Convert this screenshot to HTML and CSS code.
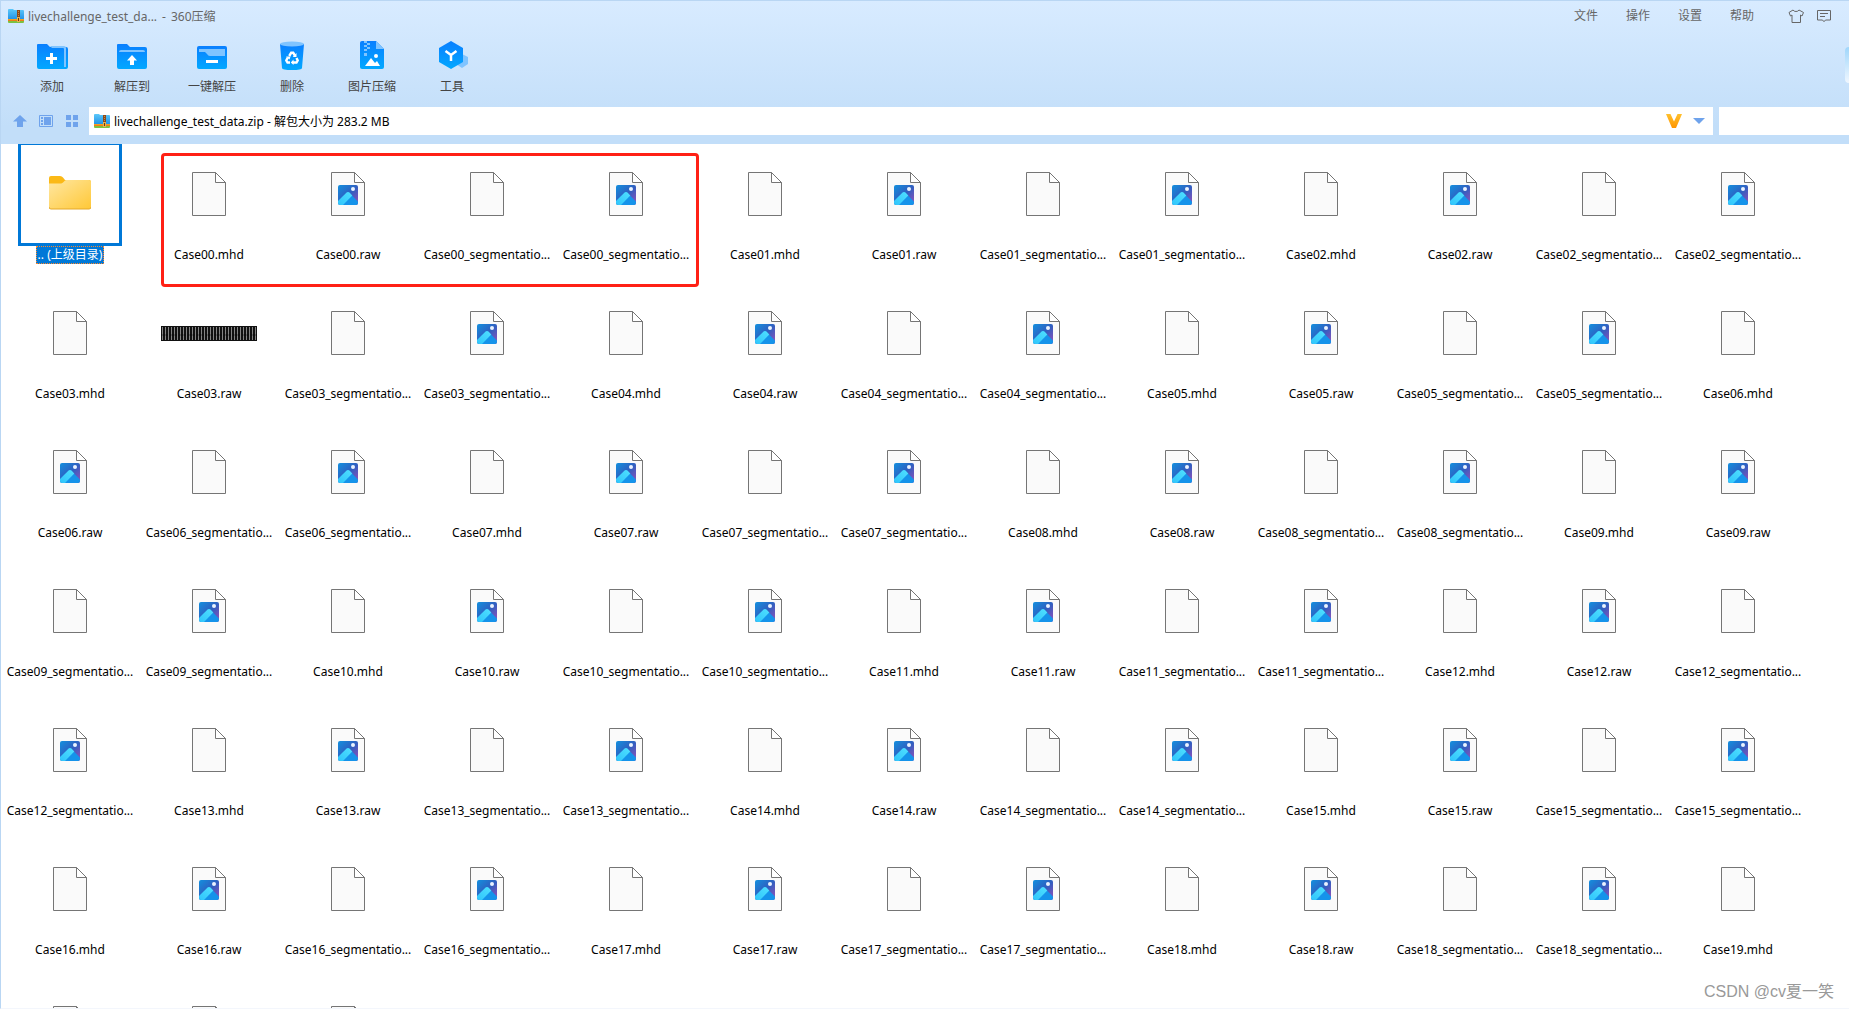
FILE: index.html
```html
<!DOCTYPE html>
<html lang="zh-CN">
<head>
<meta charset="utf-8">
<title>livechallenge_test_data.zip - 360压缩</title>
<link rel="stylesheet" href="styles.css">
</head>
<body>
<svg class="defs" aria-hidden="true">
  <defs>
    <linearGradient id="blue" x1="0" y1="0" x2="0" y2="1"><stop offset="0" stop-color="#0a7fff"/><stop offset="1" stop-color="#02a8ff"/></linearGradient>
    <linearGradient id="folderFill" x1="0" y1="0" x2="1" y2="1"><stop offset="0" stop-color="#ffe7a2"/><stop offset="1" stop-color="#ffc837"/></linearGradient>
    <linearGradient id="photoSky" x1="0" y1="0" x2="1" y2="1"><stop offset="0" stop-color="#1390de"/><stop offset=".5" stop-color="#2f5fc0"/><stop offset="1" stop-color="#9a4fb8"/></linearGradient>
    <linearGradient id="photoHill" x1="0" y1="1" x2="1" y2="0"><stop offset="0" stop-color="#2fc4fb"/><stop offset="1" stop-color="#4fe0ff"/></linearGradient>
    <linearGradient id="gold" x1="0" y1="0" x2="0" y2="1"><stop offset="0" stop-color="#ffc12e"/><stop offset="1" stop-color="#ff9500"/></linearGradient>
    <linearGradient id="zipBlue" x1="0" y1="0" x2="0" y2="1"><stop offset="0" stop-color="#5cc8fa"/><stop offset="1" stop-color="#1d8fe6"/></linearGradient>
    <pattern id="slices" width="3" height="15" patternUnits="userSpaceOnUse"><rect width="3" height="15" fill="#111"/><rect x="1" y="1" width="1" height="13" fill="#858585"/></pattern>
  </defs>
  <symbol id="zip" viewBox="0 0 16 14">
    <path d="M0 1q0-1 1-1h4l1 1h9q1 0 1 1v9H0z" fill="url(#zipBlue)"/>
    <path d="M0 10h16v1H0z" fill="#f6a01e"/>
    <path d="M0 11h16v1H0z" fill="#ef7c1a"/>
    <path d="M0 12h16v1q0 1-1 1H1q-1 0-1-1z" fill="#7cc142"/>
    <path d="M9 1h3v9H9z" fill="#8a4a1c"/><path d="M10 2h1v1h-1zM10 4h1v1h-1zM10 6h1v1h-1z" fill="#c98743"/>
    <path d="M9 8h3v5H9z" fill="#e9b04c"/><path d="M10 9h1v3h-1z" fill="#6b3810"/>
  </symbol>
  <symbol id="doc" viewBox="0 0 34 44">
    <path d="M.5.5h23l10 10v33H.5z" fill="#fafafa" stroke="#757575"/>
    <path d="M23.500.5v10h10z" fill="#fff" stroke="#757575"/>
  </symbol>
  <symbol id="photo" viewBox="0 0 34 44">
    <use href="#doc"/>
    <rect x="7" y="13" width="20" height="20" rx="2" fill="url(#photoSky)"/>
    <path d="M15.500 21q1.500-1.500 3 0L27 29.500V31q0 2-2 2H9z" fill="#1593ea"/>
    <path d="M7 29l8.300-8.200q1.700-1.600 3.400 0l2.600 2.700L12 33H9q-2 0-2-2z" fill="url(#photoHill)"/>
    <circle cx="22" cy="17" r="2" fill="#eaf3ff"/>
  </symbol>
  <symbol id="folder" viewBox="0 0 42 34">
    <path d="M0 2q0-2 2-2h9q2 0 3 1.500L16 4h24q2 0 2 2v8H0z" fill="#fbb917"/>
    <path d="M0 7.500h12q1 0 2-1l1.500-1.500q1-1 2-1H40q2 0 2 2v25q0 2-2 2H2q-2 0-2-2z" fill="url(#folderFill)"/>
    <path d="M0 31q0 2 2 2h38q2 0 2-2" fill="none" stroke="#e5a92a"/>
  </symbol>
  <symbol id="strip" viewBox="0 0 96 15"><rect width="96" height="15" fill="url(#slices)"/><path d="M0 9h96" stroke="#000" stroke-opacity=".2" stroke-width="2" stroke-dasharray="7 2"/></symbol>
</svg>

<div class="window">
  <header class="chrome">
    <div class="titlebar">
      <svg class="zip-icon"><use href="#zip"/></svg>
      <h1 class="title"><span>livechallenge_test_da...</span><span>-</span><span>360压缩</span></h1>
      <nav class="menu">
        <button>文件</button><button>操作</button><button>设置</button><button>帮助</button>
      </nav>
      <button class="glyph" aria-label="皮肤"><svg width="16" height="14" viewBox="0 0 16 14" fill="none" stroke="#666"><path d="M5 1 1 3.500 2.500 7 4 6v7.500h8.500V6L14 7l1.500-3.500L11 1Q10 2.500 8 2.500T5 1z"/></svg></button>
      <button class="glyph" aria-label="反馈"><svg width="14" height="13" viewBox="0 0 14 13" fill="none" stroke="#666"><path d="M.5.500h13v9.500h-5L7 11.700 5.500 10h-5zM3 3.500h8M3 6.500h5"/></svg></button>
    </div>

    <div class="toolbar">
      <button class="tool"><svg viewBox="0 0 32 30"><path d="M1 4q0-1 1-1h9l3 3h16q2 0 2 2v18q0 2-2 2H3q-2 0-2-2z" fill="url(#blue)"/><path d="M14 5h14q2 0 2 2v19h-2V8q0-1-1-1H16z" fill="#80c4ff"/><path d="M15.500 12v11M10 17.500h11" stroke="#fff" stroke-width="3"/></svg>添加</button>
      <button class="tool"><svg viewBox="0 0 32 30"><path d="M1 4q0-1 1-1h9l3 3h15q2 0 2 2v18q0 2-2 2H3q-2 0-2-2z" fill="url(#blue)"/><path d="M3 11q0-2 2-2h22q2 0 2 2z" fill="#80c4ff"/><path d="M16 14l5 5.500h-3V24h-4v-4.500h-3z" fill="#fff"/></svg>解压到</button>
      <button class="tool"><svg viewBox="0 0 32 30"><rect x="1" y="5" width="30" height="23" rx="2" fill="url(#blue)"/><path d="M3 8h26v7H14q-2 0-3-2l-2-2H3z" fill="#80c4ff"/><path d="M10 20.500h12" stroke="#fff" stroke-width="3"/></svg>一键解压</button>
      <button class="tool"><svg viewBox="0 0 32 30"><path d="M4 3h24l-2 24q0 2-10 2T6 27z" fill="url(#blue)"/><ellipse cx="16" cy="3" rx="12" ry="2.600" fill="#80c4ff"/><g fill="none" stroke="#fff" stroke-width="2.400"><path d="M13.200 15l2-3.200h2l1.700 2.700M20.500 17l1.200 2.500-1.200 2h-3.500M14 21.500h-2.500l-1.200-2 1.500-3"/></g><path d="M20.500 12v4h-3.800zM17.500 18.500v5.500L14.800 21.500zM10 15.500h4.500l-1 3z" fill="#fff"/></svg>删除</button>
      <button class="tool"><svg viewBox="0 0 32 30"><path d="M4 2q0-2 2-2h14l8 8v18q0 2-2 2H6q-2 0-2-2z" fill="url(#blue)"/><path d="M20 0l8 8h-8z" fill="#80c4ff"/><path d="M8 0h3v2H8zM11 2h3v2h-3zM8 4h3v2H8zM11 6h3v2h-3zM8 8h3v2H8zM8 12h3v3H8z" fill="#80c4ff"/><path d="M9 25l6-8 4 5 2-2 3 5z" fill="#fff"/><circle cx="20" cy="15" r="2" fill="#fff"/></svg>图片压缩</button>
      <button class="tool"><svg viewBox="0 0 32 30"><path d="M26 13l6 3v7l-6 4-6-4z" fill="#80c4ff"/><path d="M15 0l12 7v14l-12 7-12-7V7z" fill="url(#blue)"/><path d="M9.500 10l5.500 4 5.500-4M15 14v6" fill="none" stroke="#fff" stroke-width="2.500"/></svg>工具</button>
      <span class="edge-handle"></span>
    </div>

    <div class="location">
      <button class="nav" aria-label="上级目录"><svg viewBox="0 0 14 12"><path d="M7 0l7 6.500h-4V12H4V6.500H0z" fill="#6fa3ec"/></svg></button>
      <button class="nav" aria-label="列表"><svg viewBox="0 0 14 12"><path d="M.5.500h13v11H.5z" fill="none" stroke="#6fa3ec"/><path d="M5 2h7v8H5zM2 2h2v2H2zM2 5h2v2H2zM2 8h2v2H2z" fill="#6fa3ec"/></svg></button>
      <button class="nav" aria-label="图标"><svg viewBox="0 0 14 12"><path d="M1 0h5v5H1zM8 0h5v5H8zM1 7h5v5H1zM8 7h5v5H8z" fill="#6fa3ec"/></svg></button>
      <div class="address">
        <svg class="zip-icon"><use href="#zip"/></svg>
        <input class="path" aria-label="路径" value="livechallenge_test_data.zip - 解包大小为 283.2 MB" readonly>
        <svg class="vip" viewBox="0 0 16 14"><path d="M0 0h4.500L8 7.500 11.500 0H16l-6 14H6z" fill="url(#gold)"/></svg>
        <button class="drop" aria-label="展开"><svg width="12" height="6" viewBox="0 0 12 6"><path d="M0 0h12L6 6z" fill="#6fa3ec"/></svg></button>
      </div>
      <input class="search" type="search" aria-label="搜索">
    </div>
  </header>

  <main class="files">
    <ul class="grid" id="grid"></ul>
    <div class="marker"></div>
  </main>
  <p class="watermark">CSDN @cv夏一笑</p>
</div>
<script src="files.js"></script>
</body>
</html>
```
FILE: styles.css
```css
* { box-sizing: border-box; }
body {
  margin: 0;
  font: 12px/18px "Noto Sans", "Noto Sans CJK SC", sans-serif;
  color: #000;
}
button, input { font: inherit; color: inherit; border: 0; padding: 0; background: none; }
.defs { position: absolute; width: 0; height: 0; }
.window {
  position: relative;
  display: flex;
  flex-direction: column;
  height: 100vh;
  border: 1px solid #b9d6f3;
  border-right: 0;
  border-bottom-color: #f3f6fc;
  overflow: hidden;
}
.chrome { background: linear-gradient(#d8ebff, #c2def9 88%); }
.titlebar { display: flex; align-items: center; height: 30px; padding: 0 18px 0 7px; color: #666; }
.zip-icon { flex: none; width: 16px; height: 14px; }
.title { flex: 1; display: flex; gap: 5px; margin: 0 0 0 4px; padding-top: 2px; font-size: 12px; font-weight: 400; }
.menu { display: flex; gap: 28px; margin-right: 34px; }
.glyph { display: flex; }
.glyph + .glyph { margin-left: 13px; }
.toolbar { position: relative; display: flex; height: 76px; padding: 10px 0 0 11px; }
.tool { display: flex; flex-direction: column; align-items: center; gap: 7px; width: 80px; color: #444; }
.tool svg { width: 32px; height: 30px; }
.edge-handle {
  position: absolute;
  top: 16px;
  right: 0;
  width: 4px;
  height: 36px;
  border-radius: 4px 0 0 4px;
  background: linear-gradient(#9fd6fb, #f0f7ff);
}
.location { display: flex; align-items: center; height: 37px; padding-bottom: 9px; }
.nav { display: flex; margin-left: 12px; }
.nav svg { width: 14px; height: 12px; }
.address { flex: 1; display: flex; align-items: center; height: 28px; margin-left: 10px; padding: 0 8px 0 5px; background: #fff; }
.path { flex: 1; margin-left: 4px; padding-top: 2px; outline: 0; }
.vip { width: 16px; height: 14px; }
.drop { display: flex; margin-left: 11px; }
.search { width: 130px; height: 28px; margin-left: 6px; background: #fff; outline: 0; }
.files { position: relative; flex: 1; min-height: 0; overflow: hidden; background: #fff; }
.grid { display: grid; grid-template-columns: repeat(auto-fill, 139px); grid-auto-rows: 139px; margin: 0; padding: 0; list-style: none; }
.item { display: flex; flex-direction: column; align-items: center; padding-right: 1px; }
.thumb { display: flex; align-items: center; justify-content: center; width: 104px; height: 102px; padding-bottom: 2px; }
.name { max-width: 136px; line-height: 18px; white-space: nowrap; }
.doc { width: 34px; height: 44px; }
.folder { width: 42px; height: 34px; }
.strip { width: 96px; height: 15px; }
.selected .thumb { border: 3px solid #0078d7; border-top-width: 1px; }
.selected .name { padding: 0 2px; background: #0078d7; color: #fff; outline: 1px dotted #ff8728; outline-offset: -1px; }
.marker {
  position: absolute;
  top: 9px;
  left: 160px;
  width: 538px;
  height: 134px;
  border: 3px solid #ff2015;
  border-radius: 4px;
}
.watermark { position: absolute; right: 15px; bottom: 5px; margin: 0; font: 16px/22px "Liberation Sans", "Noto Sans CJK SC", sans-serif; color: #999; }
```
FILE: files.js
```js
const grid = document.getElementById('grid');

function addItem(name, icon, selected) {
  const size = icon === 'photo' ? 'doc' : icon;
  const li = document.createElement('li');
  li.className = selected ? 'item selected' : 'item';
  li.innerHTML = `<span class="thumb"><svg class="${size}"><use href="#${icon}"/></svg></span><span class="name">${name}</span>`;
  grid.append(li);
}

addItem('.. (上级目录)', 'folder', true);
for (let i = 0; i < 20; i++) {
  const id = 'Case' + String(i).padStart(2, '0');
  addItem(`${id}.mhd`, 'doc');
  addItem(`${id}.raw`, i === 3 ? 'strip' : 'photo');
  addItem(`${id}_segmentatio...`, 'doc');
  addItem(`${id}_segmentatio...`, 'photo');
}
```
